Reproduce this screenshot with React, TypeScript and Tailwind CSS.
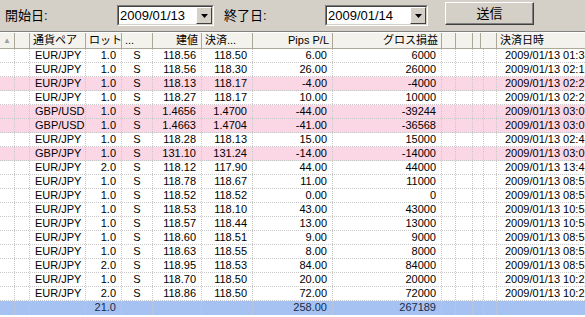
import React from 'react'

type Trade = {
  pair: string
  lot: string
  side: string
  open: string
  close: string
  pips: string
  gross: string
  time: string
  loss?: boolean
}

const trades: Trade[] = [
  { pair: 'EUR/JPY', lot: '1.0', side: 'S', open: '118.56', close: '118.50', pips: '6.00', gross: '6000', time: '2009/01/13 01:3' },
  { pair: 'EUR/JPY', lot: '1.0', side: 'S', open: '118.56', close: '118.30', pips: '26.00', gross: '26000', time: '2009/01/13 02:1' },
  { pair: 'EUR/JPY', lot: '1.0', side: 'S', open: '118.13', close: '118.17', pips: '-4.00', gross: '-4000', time: '2009/01/13 02:2', loss: true },
  { pair: 'EUR/JPY', lot: '1.0', side: 'S', open: '118.27', close: '118.17', pips: '10.00', gross: '10000', time: '2009/01/13 02:2' },
  { pair: 'GBP/USD', lot: '1.0', side: 'S', open: '1.4656', close: '1.4700', pips: '-44.00', gross: '-39244', time: '2009/01/13 03:0', loss: true },
  { pair: 'GBP/USD', lot: '1.0', side: 'S', open: '1.4663', close: '1.4704', pips: '-41.00', gross: '-36568', time: '2009/01/13 03:0', loss: true },
  { pair: 'EUR/JPY', lot: '1.0', side: 'S', open: '118.28', close: '118.13', pips: '15.00', gross: '15000', time: '2009/01/13 02:4' },
  { pair: 'GBP/JPY', lot: '1.0', side: 'S', open: '131.10', close: '131.24', pips: '-14.00', gross: '-14000', time: '2009/01/13 03:0', loss: true },
  { pair: 'EUR/JPY', lot: '2.0', side: 'S', open: '118.12', close: '117.90', pips: '44.00', gross: '44000', time: '2009/01/13 13:4' },
  { pair: 'EUR/JPY', lot: '1.0', side: 'S', open: '118.78', close: '118.67', pips: '11.00', gross: '11000', time: '2009/01/13 08:5' },
  { pair: 'EUR/JPY', lot: '1.0', side: 'S', open: '118.52', close: '118.52', pips: '0.00', gross: '0', time: '2009/01/13 08:5' },
  { pair: 'EUR/JPY', lot: '1.0', side: 'S', open: '118.53', close: '118.10', pips: '43.00', gross: '43000', time: '2009/01/13 10:5' },
  { pair: 'EUR/JPY', lot: '1.0', side: 'S', open: '118.57', close: '118.44', pips: '13.00', gross: '13000', time: '2009/01/13 10:5' },
  { pair: 'EUR/JPY', lot: '1.0', side: 'S', open: '118.60', close: '118.51', pips: '9.00', gross: '9000', time: '2009/01/13 08:5' },
  { pair: 'EUR/JPY', lot: '1.0', side: 'S', open: '118.63', close: '118.55', pips: '8.00', gross: '8000', time: '2009/01/13 08:5' },
  { pair: 'EUR/JPY', lot: '2.0', side: 'S', open: '118.95', close: '118.53', pips: '84.00', gross: '84000', time: '2009/01/13 08:5' },
  { pair: 'EUR/JPY', lot: '1.0', side: 'S', open: '118.70', close: '118.50', pips: '20.00', gross: '20000', time: '2009/01/13 10:2' },
  { pair: 'EUR/JPY', lot: '2.0', side: 'S', open: '118.86', close: '118.50', pips: '72.00', gross: '72000', time: '2009/01/13 10:2' },
]

const cols = 'grid grid-cols-[15px_15px_56px_36px_31px_49px_51px_80px_109px_14px_17px_8px_16px_120px]'
const cell = 'border-r border-dotted border-[#c8c8c8] px-[5px] overflow-hidden whitespace-nowrap'
const head = 'border-r border-[#aca899] px-[3px] overflow-hidden whitespace-nowrap'

function DateBox({ value }: { value: string }) {
  return (
    <div className="flex h-[21px] border border-t-[#7f7f7f] border-l-[#7f7f7f] border-b-white border-r-white">
      <div className="flex flex-1 border border-t-[#404040] border-l-[#404040] border-b-[#d4d0c8] border-r-[#d4d0c8] bg-white">
        <span className="flex-1 pl-[1px] leading-[17px]">{value}</span>
        <div className="flex w-[16px] items-center justify-center border border-t-white border-l-white border-b-[#404040] border-r-[#404040] bg-[#d4d0c8]">
          <svg width="7" height="4" viewBox="0 0 7 4">
            <path d="M0 0h7L3.5 4z" fill="#000" />
          </svg>
        </div>
      </div>
    </div>
  )
}

export default function App() {
  return (
    <div
      className="h-[317px] w-[585px] overflow-hidden bg-white text-[11px] text-black"
      style={{ fontFamily: '"Liberation Sans", "Noto Sans CJK JP", sans-serif' }}
    >
      <div className="flex h-[31px] items-center bg-[#d4d0c8] text-[13px]">
        <span className="ml-[5px] w-[112px]">開始日:</span>
        <div className="w-[97px]">
          <DateBox value="2009/01/13" />
        </div>
        <span className="ml-[10px] w-[101px]">終了日:</span>
        <div className="w-[103px]">
          <DateBox value="2009/01/14" />
        </div>
        <button
          type="button"
          className="mb-[4px] ml-[17px] h-[23px] w-[89px] border border-t-white border-l-white border-b-[#404040] border-r-[#404040] bg-[#d4d0c8] shadow-[inset_-1px_-1px_0_#808080]"
        >
          送信
        </button>
      </div>
      <div className="h-[2px] border-t border-[#808080] bg-white" />

      <div className={`${cols} h-[16px] border-b border-[#aca899] bg-[#f3f2ec] leading-[15px]`}>
        <div className={`${head} text-center text-[8px] text-[#a0a0a0]`}>▲</div>
        <div className={head} />
        <div className={head}>通貨ペア</div>
        <div className={head}>ロット</div>
        <div className={head}>...</div>
        <div className={`${head} text-right`}>建値</div>
        <div className={head}>決済...</div>
        <div className={`${head} text-right`}>Pips P/L</div>
        <div className={`${head} text-right`}>グロス損益</div>
        <div className={head} />
        <div className={head} />
        <div className={head} />
        <div className={head} />
        <div className={head}>決済日時</div>
      </div>

      {trades.map((t, i) => (
        <div
          key={i}
          className={`${cols} h-[14px] border-b border-dotted border-[#c8c8c8] leading-[13px] ${t.loss ? 'bg-[#fbd7e6]' : ''}`}
        >
          <div className={cell} />
          <div className={cell} />
          <div className={`${cell} text-center`}>{t.pair}</div>
          <div className={`${cell} text-right`}>{t.lot}</div>
          <div className={`${cell} text-center`}>{t.side}</div>
          <div className={`${cell} text-right`}>{t.open}</div>
          <div className={`${cell} text-right`}>{t.close}</div>
          <div className={`${cell} text-right`}>{t.pips}</div>
          <div className={`${cell} text-right`}>{t.gross}</div>
          <div className={cell} />
          <div className={cell} />
          <div className={cell} />
          <div className={cell} />
          <div className={`${cell} pl-[8px]`}>{t.time}</div>
        </div>
      ))}

      <div className={`${cols} h-[14px] bg-[#a6c2f3] leading-[13px] text-[#1a2a4a]`}>
        <div className={cell} />
        <div className={cell} />
        <div className={cell} />
        <div className={`${cell} text-right`}>21.0</div>
        <div className={cell} />
        <div className={cell} />
        <div className={cell} />
        <div className={`${cell} text-right`}>258.00</div>
        <div className={`${cell} text-right`}>267189</div>
        <div className={cell} />
        <div className={cell} />
        <div className={cell} />
        <div className={cell} />
        <div className={cell} />
      </div>
    </div>
  )
}
